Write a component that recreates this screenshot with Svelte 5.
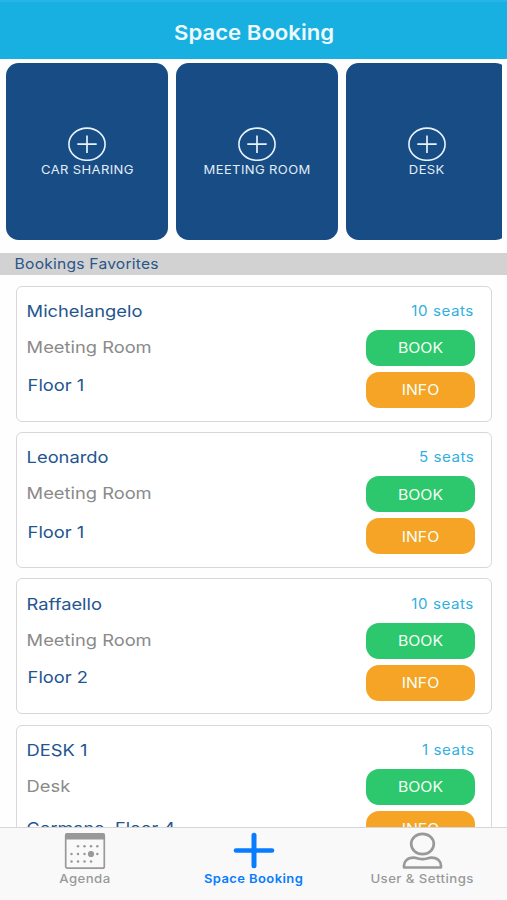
<script>
  const spaces = ['CAR SHARING', 'MEETING ROOM', 'DESK'];
  const favorites = [
    { name: 'Michelangelo', kind: 'Meeting Room', place: 'Floor 1', seats: 10 },
    { name: 'Leonardo', kind: 'Meeting Room', place: 'Floor 1', seats: 5 },
    { name: 'Raffaello', kind: 'Meeting Room', place: 'Floor 2', seats: 10, raised: true },
    { name: 'DESK 1', kind: 'Desk', place: 'Cormano, Floor 4', seats: 1, full: true }
  ];
</script>

<div class="app">
  <header><h1>Space Booking</h1></header>

  <section class="spaces">
    {#each spaces as label}
      <button class="tile">
        <svg width="38" height="34" viewBox="0 0 38 34" fill="none" stroke="#e6f3fb">
          <ellipse cx="19" cy="17.2" rx="18.1" ry="16.1" stroke-width="1.6" />
          <path d="M9.3 17.2h19.4M19 8.5v17.4" stroke-width="1.7" />
        </svg>
        <span>{label}</span>
      </button>
    {/each}
  </section>

  <h2><span>Bookings Favorites</span></h2>

  <main>
    {#each favorites as item}
      <article>
        <div class="details">
          <span class="name">{item.name}</span>
          <span class="kind">{item.kind}</span>
          <span class="place" class:raised={item.raised} class:full={item.full}>{item.place}</span>
        </div>
        <div class="actions">
          <span class="seats">{item.seats} seats</span>
          <button class="book"><span>BOOK</span></button>
          <button class="info"><span>INFO</span></button>
        </div>
      </article>
    {/each}
  </main>

  <nav>
    <a class="tab" href="#agenda">
      <svg width="42" height="38" viewBox="0 0 42 38">
        <rect x="1.7" y="2" width="38.6" height="34.2" rx="1.8" fill="none" stroke="#999" stroke-width="1.7" />
        <path d="M1 7.5V3q0-2 2-2h36q2 0 2 2v4.5z" fill="#999" />
        <g fill="#999">
          {#each [14, 20.5, 27, 33.3] as x}<circle cx={x} cy="14.3" r="1.25" />{/each}
          {#each [7.5, 14, 20.5, 33.3] as x}<circle cx={x} cy="22" r="1.25" />{/each}
          {#each [7.5, 14, 20.5, 27] as x}<circle cx={x} cy="29.6" r="1.25" />{/each}
          <circle cx="27" cy="22" r="3.1" />
        </g>
      </svg>
      <span>Agenda</span>
    </a>
    <a class="tab active" href="#booking">
      <svg width="42" height="38" viewBox="0 0 42 38" fill="none" stroke="#087cff" stroke-linecap="round">
        <path d="M3 18.5h36" stroke-width="4.6" />
        <path d="M21 3.2v30.5" stroke-width="5" />
      </svg>
      <span>Space Booking</span>
    </a>
    <a class="tab" href="#user">
      <svg width="42" height="38" viewBox="0 0 42 38" fill="none" stroke="#999" stroke-width="2.7" stroke-linejoin="round">
        <ellipse cx="20.5" cy="12" rx="11.3" ry="10.1" />
        <path d="M2.1 35.5C1.1 29.5 5.5 25.8 11.5 25.7C15 25.7 17 27.2 20.5 27.2S26 25.7 29.5 25.7C35.5 25.8 39.9 29.5 38.9 35.5Z" />
      </svg>
      <span>User &amp; Settings</span>
    </a>
  </nav>
</div>

<style>
  :global(body) { margin: 0; background: #fdfefe; }
  .app {
    width: 507px;
    height: 900px;
    overflow: hidden;
    display: flex;
    flex-direction: column;
    background: #fefefe;
    font-family: Inter, "Liberation Sans", sans-serif;
  }
  * { box-sizing: border-box; }
  button { border: 0; padding: 0; font: inherit; }
  span, h1 { display: block; white-space: nowrap; }
  header {
    flex: 0 0 58.5px;
    background: #18b0e1;
    border-top: 2px solid #27b4e8;
    display: flex;
    justify-content: center;
    padding: 17.5px 0 0 2px;
  }
  h1 { margin: 0; color: #edfaff; font-size: 20.5px; line-height: 26px; font-weight: 600; transform: scaleX(1.08); }
  .spaces {
    flex: 0 0 194px;
    margin: 0 5px 0 6px;
    padding-top: 4.8px;
    display: flex;
    gap: 8px;
    overflow: hidden;
    border-radius: 0 3px 3px 0;
  }
  .tile {
    flex: 0 0 162px;
    height: 177px;
    border-radius: 12.5px;
    background: #184c84;
    color: #e1eef8;
    display: flex;
    flex-direction: column;
    align-items: center;
    padding-top: 64px;
  }
  .tile span { font-size: 12.2px; line-height: 16px; margin-top: 1px; letter-spacing: .35px; transform: scaleX(1.068); }
  h2 { margin: 0; flex: 0 0 22px; background: #d2d2d2; color: #2b5689; padding-left: 14.5px; font-weight: 400; }
  h2 span { font-size: 14.5px; line-height: 21px; letter-spacing: .2px; transform: translateX(-.4px) scaleX(1.078); transform-origin: left; }
  main {
    flex: 1;
    min-height: 0;
    overflow: hidden;
    display: flex;
    flex-direction: column;
    gap: 10.4px;
    padding: 11px 15px 0 15.5px;
  }
  article {
    flex: 0 0 136px;
    border: 1.5px solid #d8d8d8;
    border-radius: 6px;
    background: #fff;
    display: flex;
    justify-content: space-between;
    padding: 0 16px 0 10px;
  }
  .details { display: flex; flex-direction: column; align-items: flex-start; color: #24558f; font-size: 16.5px; line-height: 20px; padding-top: 14.3px; }
  .details span { transform: translateX(-.4px) scaleX(1.11); transform-origin: left; }
  .details .kind { color: #8a8a8a; margin-top: 16px; }
  .details .place { margin: 18.5px 0 0 1.5px; }
  .details .place.raised { margin: 17.2px 0 0 1px; }
  .details .place.full { margin: 22px 0 0; transform: translateX(-.4px) scaleX(1.09); }
  .actions { display: flex; flex-direction: column; align-items: flex-end; padding-top: 14.3px; }
  .seats { color: #2fb0e0; font-size: 14px; line-height: 20px; letter-spacing: .5px; margin-right: .7px; transform: scaleX(1.08); transform-origin: right; }
  .actions button { width: 109px; height: 36px; border-radius: 13px; color: #f4fff4; font-size: 14.5px; }
  .actions button span { transform: scaleX(1.09); }
  .book { background: #2dc76d; margin-top: 9px; }
  .info { background: #f6a426; margin-top: 6px; }
  nav {
    flex: 0 0 73px;
    background: #f9f9f9;
    border-top: 1px solid #d6d6d6;
    display: flex;
  }
  .tab { flex: 1; display: flex; flex-direction: column; align-items: center; padding-top: 4px; color: #999; text-decoration: none; }
  .tab span { font-size: 12.3px; line-height: 17px; font-weight: 500; letter-spacing: .4px; transform: scaleX(1.075); }
  .tab.active span { color: #087cff; font-weight: 600; transform: translateX(.5px) scaleX(1.055); }
</style>
